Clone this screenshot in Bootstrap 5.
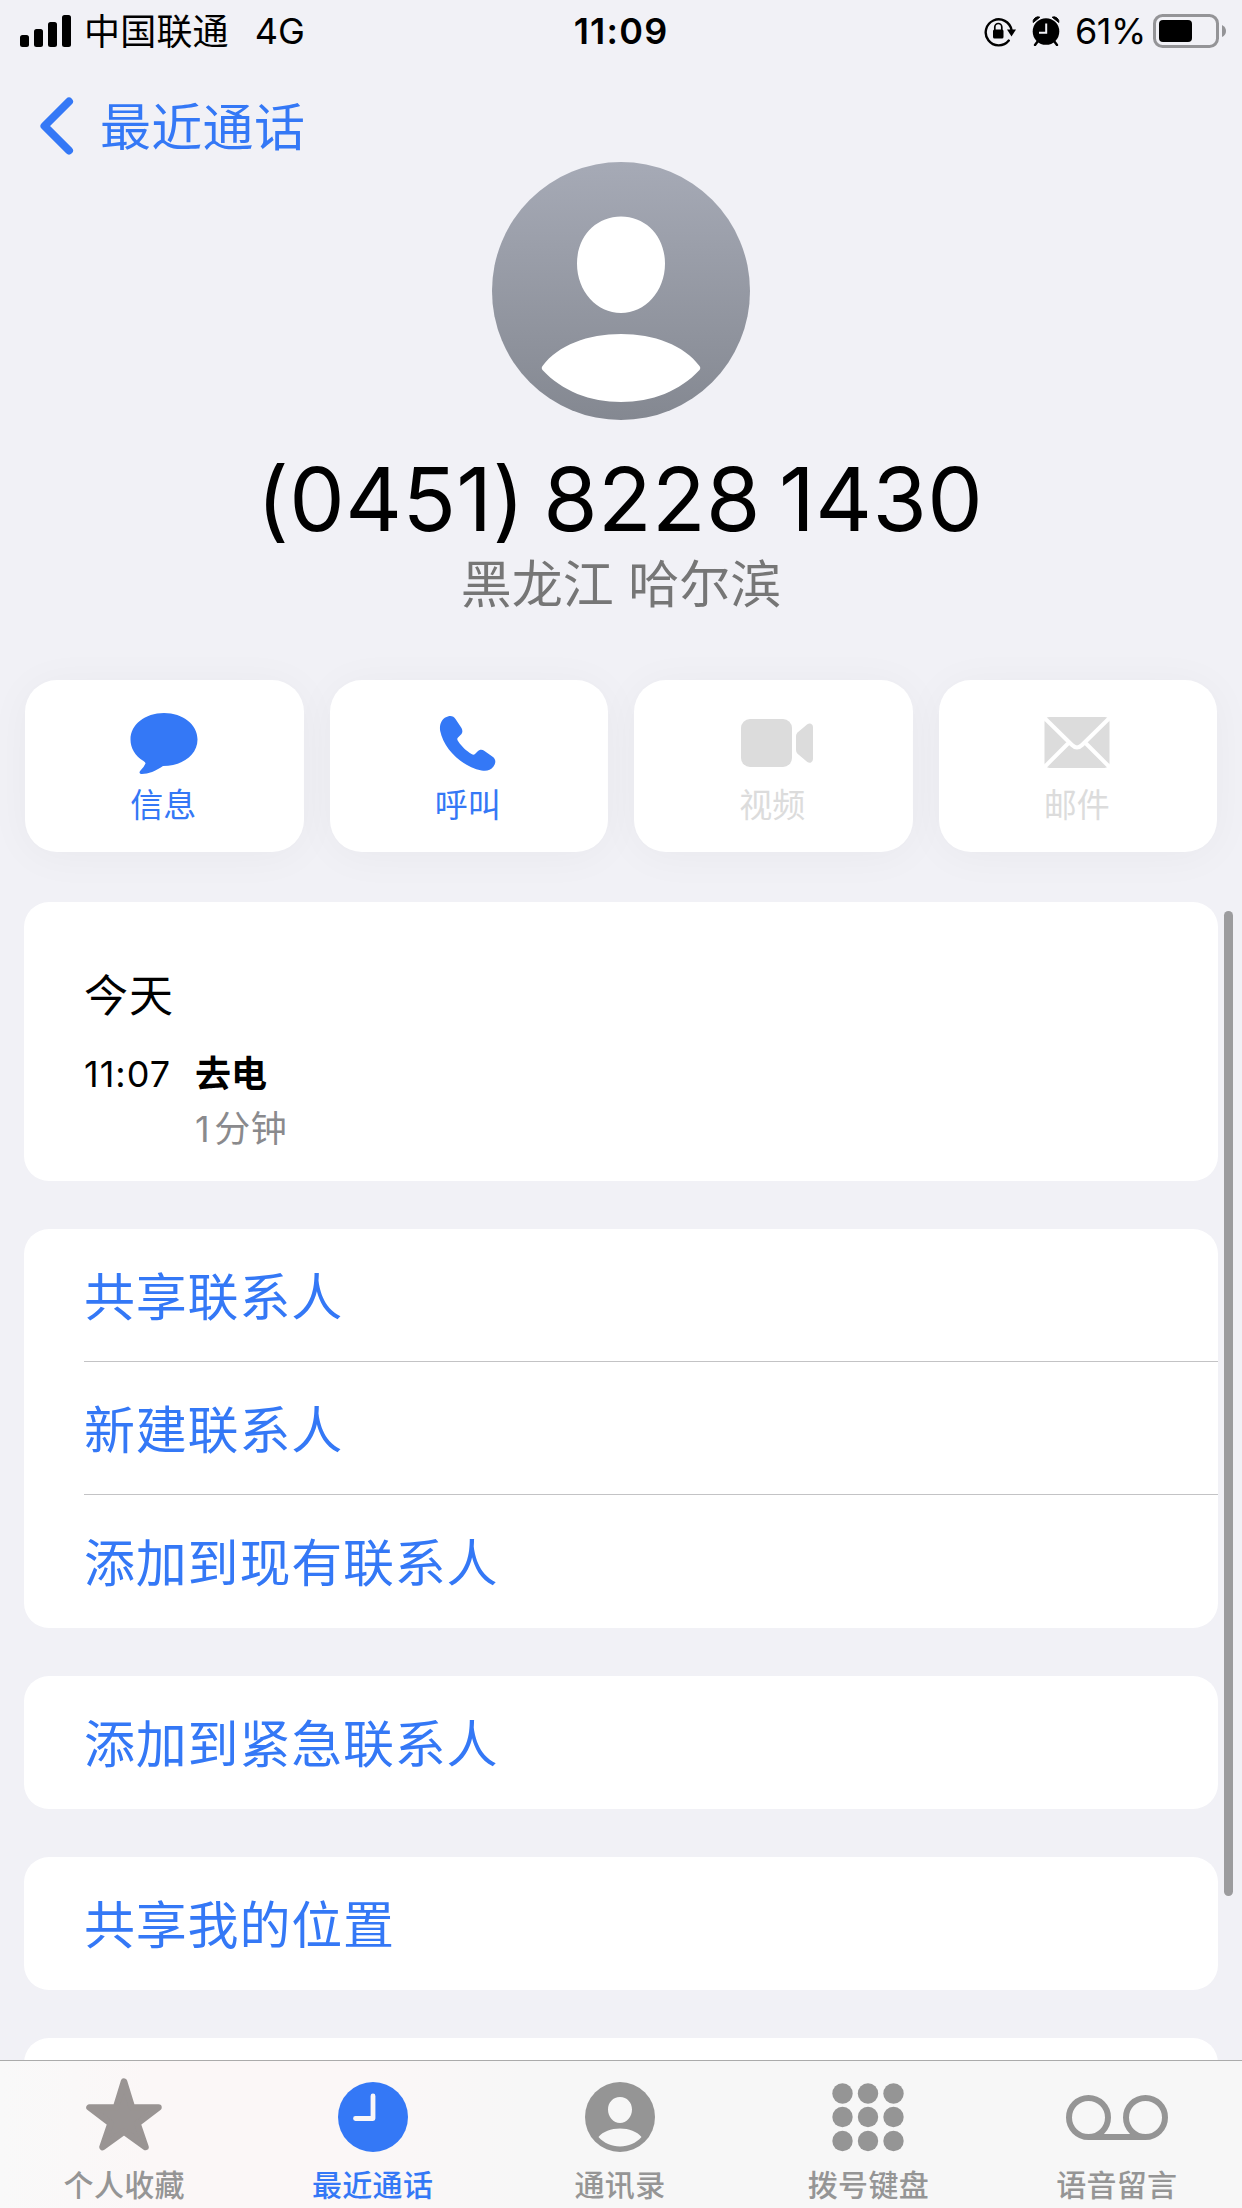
<!DOCTYPE html>
<html lang="zh-CN">
<head>
<meta charset="utf-8">
<meta name="viewport" content="width=device-width, initial-scale=1">
<title>最近通话</title>
<link href="https://cdn.jsdelivr.net/npm/bootstrap@5.3.0/dist/css/bootstrap.min.css" rel="stylesheet">
<style>
:root{--ios-blue:#3478f6;--ios-bg:#f1f1f6;--ios-grey:#959595}
html,body{height:2208px;overflow:hidden}
body{background:var(--ios-bg);color:#000;font-family:Inter,"Noto Sans CJK SC",sans-serif;font-size:36px;line-height:1}
svg{display:block;flex:none}
.ios-blue{color:var(--ios-blue)}
.status{height:62px;padding:0 15px 0 20px}
.status>div{flex:1 1 0}
.carrier{margin-left:12px;padding-top:2px;letter-spacing:.2px}
.net{margin-left:26px}
.clock-time{font-weight:600;letter-spacing:1.2px;margin-right:5px}
.pct{margin:0 7px 0 15px;letter-spacing:-.4px}
.back{height:100px;padding:27px 0 0 40px}
.back-text{font-size:51px;letter-spacing:.3px;margin-left:26px;padding-top:4px}
.number{font-size:88px;line-height:100px;margin-top:29px;word-spacing:-7px;letter-spacing:.4px;font-feature-settings:"calt" 0;padding-right:2px}
.place{font-size:51px;line-height:60px;margin-top:6px;color:#767676}
.actions{gap:26px;margin:65px 25px 0}
.action{flex:1 1 0;height:172px;border-radius:32px;background:#fff;box-shadow:0 4px 44px rgba(0,0,0,.04);color:var(--ios-blue);padding-top:28px}
.action.off{color:#dcdcdc}
.action-label{font-size:33px;line-height:40px;margin-top:9px;padding-right:2px}
.panel{background:#fff;border-radius:25px;margin:0 24px;overflow:hidden}
.log{height:279px;margin-top:50px;padding:71px 0 0 60px}
.log-day{font-size:44px;line-height:46px;letter-spacing:1px}
.log-row{margin-top:33px;line-height:44px}
.log-time{width:111px;letter-spacing:1px}
.log-len{color:#8a8a8d;margin-top:11px;letter-spacing:.5px}
.log-len span{margin-right:4px}
.entry{height:133px;margin-left:60px;padding-top:4px;color:var(--ios-blue);font-size:51px;letter-spacing:.8px}
.entry:not(:last-child){border-bottom:1px solid #c3c3c5}
.stack{margin-top:48px}
.tabs{height:148px;background:linear-gradient(90deg,#f9f9f9 0,#fbf7f7 12%,#fbf7f7 30%,#f7f7f7 42%,#f7f7f7 100%);border-top:1px solid #ababab;color:var(--ios-grey)}
.tab{flex:1 1 0;padding-top:16px}
.tab-label{font-size:30px;line-height:36px;font-weight:500;margin-top:10px;letter-spacing:.3px}
.tab:nth-child(n+3)>*{margin-right:2px}
.scroll-thumb{position:absolute;left:1224px;top:911px;width:9px;height:985px;border-radius:5px;background:#9c9c9e}
</style>
</head>
<body>
<header class="status d-flex align-items-center">
  <div class="d-flex align-items-center">
    <svg width="52" height="32" viewBox="0 0 52 32"><rect y="20" width="9" height="12" rx="2.5"/><rect x="14" y="14" width="9" height="18" rx="2.5"/><rect x="28" y="7" width="9" height="25" rx="2.5"/><rect x="42" width="9" height="32" rx="2.5"/></svg>
    <span class="carrier">中国联通</span><span class="net">4G</span>
  </div>
  <span class="clock-time">11:09</span>
  <div class="d-flex align-items-center justify-content-end">
    <svg width="32" height="32" viewBox="0 0 32 32"><path d="M24.8 25.6A13 13 0 1 1 27.500 15" fill="none" stroke="#000" stroke-width="2.400" stroke-linecap="round"/><path d="M23 14.500h9l-4.500 7z"/><rect x="9" y="14.500" width="10.500" height="9" rx="1.500"/><path d="M10.800 15v-3a3.500 3.500 0 0 1 7 0v3" fill="none" stroke="#000" stroke-width="1.700"/></svg>
    <svg class="ms-3" width="28" height="30" viewBox="0 0 28 30"><path d="M6 25l-3 4M22 25l3 4" stroke="#000" stroke-width="2.400" stroke-linecap="round"/><path d="M1.200 6.500Q.5 4 3 2T7.800 1.200zM26.800 6.500Q27.500 4 25 2T20.200 1.200z" stroke="#000" stroke-width="1" stroke-linejoin="round"/><circle cx="14" cy="15.500" r="13.300"/><path d="M14.200 7.500v9.300H7" fill="none" stroke="#f1f1f6" stroke-width="2"/></svg>
    <span class="pct">61%</span>
    <svg width="74" height="34" viewBox="0 0 74 34"><rect x="1.500" y="1.500" width="63" height="31" rx="8" fill="none" stroke="#949497" stroke-width="3"/><rect x="6" y="6" width="33" height="22" rx="4"/><path d="M69 11q4 2 4 6t-4 6z" fill="#949497"/></svg>
  </div>
</header>
<nav class="back d-flex align-items-center ios-blue">
  <svg width="34" height="58" viewBox="0 0 34 58"><path d="M29 4.500L4.500 29 29 53.500" fill="none" stroke="currentColor" stroke-width="8" stroke-linecap="round" stroke-linejoin="round"/></svg>
  <span class="back-text">最近通话</span>
</nav>
<section class="d-flex flex-column align-items-center">
  <svg width="258" height="258" viewBox="0 0 258 258"><defs><linearGradient id="av" x2="0" y2="1"><stop stop-color="#a6aab6"/><stop offset="1" stop-color="#848891"/></linearGradient></defs><circle cx="129" cy="129" r="129" fill="url(#av)"/><path d="M129 54.500c25 0 44 20 44 47 0 28-20 49.500-44 49.500s-44-21.500-44-49.500c0-27 19-47 44-47zM50.500 204C66 183 96 172 129 172s63 11 78.500 32q1.500 2 0 4C188 229 160 240 129 240S70 229 50.500 208q-1.500-2 0-4z" fill="#fff"/></svg>
  <div class="number">(0451) 8228 1430</div>
  <div class="place">黑龙江 哈尔滨</div>
</section>
<section class="actions d-flex">
  <div class="action d-flex flex-column align-items-center"><svg width="72" height="68" viewBox="0 0 72 68"><path d="M36 5c19 0 33.500 11.500 33.500 26.500S55 58 35 58C28 63 20 66 14 66c-3 0-3-2-1.500-3.500Q16 59 17.500 55.500 17.500 54 15.500 53C7 48 2.500 40 2.500 31.500 2.500 16.500 17 5 36 5z" fill="currentColor"/></svg><span class="action-label">信息</span></div>
  <div class="action d-flex flex-column align-items-center"><svg width="72" height="68" viewBox="2 0 72 68"><path d="M17.500 8.200C21 7.500 23 9 24.500 11l6 9c1.500 3 1 5-1 7l-2.500 2.500c-1 1-1 2 0 3.500 4 6 8 9.500 13.500 13 1.500 1 2.500 1 3.500 0l2.500-2.500c2-2 4.500-2.200 7-.5l8.500 6c3 2.500 3 6 .5 9.500-3 4-7 5-12 4C30 58.500 12.500 40 9.200 23 8 16 11 9.800 17.500 8.200z" fill="currentColor"/></svg><span class="action-label">呼叫</span></div>
  <div class="action off d-flex flex-column align-items-center"><svg width="78" height="68" viewBox="-1 0 78 68" overflow="visible"><rect x="6" y="11" width="51" height="48" rx="9" fill="currentColor"/><path d="M61 28q0-2 1.500-3.500L72 16.500q2-1.500 4-.8Q78 16.500 78 19v32q0 2.500-2 3.500-2 .7-4-.8l-9.500-8Q61 44 61 42z" fill="currentColor"/></svg><span class="action-label">视频</span></div>
  <div class="action off d-flex flex-column align-items-center"><svg width="72" height="68" viewBox="1 0 72 68"><rect x="3.500" y="9" width="65" height="51" rx="5" fill="currentColor"/><path d="M3 9.500L31 37q5 5 10 0L69 9.500M3 59.500L27.500 35M69 59.500L44.500 35" fill="none" stroke="#fff" stroke-width="4"/></svg><span class="action-label">邮件</span></div>
</section>
<main>
  <section class="panel log">
    <div class="log-day">今天</div>
    <div class="log-row d-flex"><div class="log-time">11:07</div><div><div class="fw-bold">去电</div><div class="log-len"><span>1</span>分钟</div></div></div>
  </section>
  <section class="panel stack"><div class="entry d-flex align-items-center">共享联系人</div><div class="entry d-flex align-items-center">新建联系人</div><div class="entry d-flex align-items-center">添加到现有联系人</div></section>
  <section class="panel stack"><div class="entry d-flex align-items-center">添加到紧急联系人</div></section>
  <section class="panel stack"><div class="entry d-flex align-items-center">共享我的位置</div></section>
  <section class="panel stack"><div class="entry"></div></section>
</main>
<div class="scroll-thumb"></div>
<nav class="tabs fixed-bottom d-flex text-center">
  <div class="tab d-flex flex-column align-items-center"><svg width="78" height="80" viewBox="0 0 78 80"><path d="M39 4.500L47 30.500H73.500L52.500 46.500 60.500 70 39 54.500 17.500 70 25.500 46.500 4.500 30.500H31z" fill="#999493" stroke="#999493" stroke-width="6.500" stroke-linejoin="round"/></svg><span class="tab-label">个人收藏</span></div>
  <div class="tab d-flex flex-column align-items-center ios-blue"><svg width="78" height="80" viewBox="0 0 78 80"><circle cx="39" cy="40" r="35" fill="currentColor"/><path d="M39 19v22.500H21.500" fill="none" stroke="#f9f7f8" stroke-width="4.800" stroke-linecap="round" stroke-linejoin="round"/></svg><span class="tab-label">最近通话</span></div>
  <div class="tab d-flex flex-column align-items-center"><svg width="78" height="80" viewBox="0 0 78 80"><circle cx="39" cy="40" r="35" fill="currentColor"/><path d="M39 20c7 0 12 5.500 12 12.500 0 7.500-5.500 13.500-12 13.500s-12-6-12-13.500C27 25.500 32 20 39 20zM17.500 60C22 54.500 30 51.500 39 51.500S56 54.500 60.500 60C55 66 47.500 69.500 39 69.500S23 66 17.500 60z" fill="#f7f7f7"/></svg><span class="tab-label">通讯录</span></div>
  <div class="tab d-flex flex-column align-items-center"><svg width="78" height="80" viewBox="0 0 78 80" fill="currentColor"><circle cx="13.500" cy="16.500" r="10.200"/><circle cx="39" cy="16.500" r="10.200"/><circle cx="64.500" cy="16.500" r="10.200"/><circle cx="13.500" cy="40" r="10.200"/><circle cx="39" cy="40" r="10.200"/><circle cx="64.500" cy="40" r="10.200"/><circle cx="13.500" cy="64" r="10.200"/><circle cx="39" cy="64" r="10.200"/><circle cx="64.500" cy="64" r="10.200"/></svg><span class="tab-label">拨号键盘</span></div>
  <div class="tab d-flex flex-column align-items-center"><svg width="104" height="80" viewBox="0 0 104 80"><g fill="none" stroke="currentColor" stroke-width="6"><circle cx="23.500" cy="40.500" r="19.500"/><circle cx="80.500" cy="40.500" r="19.500"/><path d="M23.500 60h57"/></g></svg><span class="tab-label">语音留言</span></div>
</nav>
<script src="https://cdn.jsdelivr.net/npm/bootstrap@5.3.0/dist/js/bootstrap.bundle.min.js"></script>
</body>
</html>
